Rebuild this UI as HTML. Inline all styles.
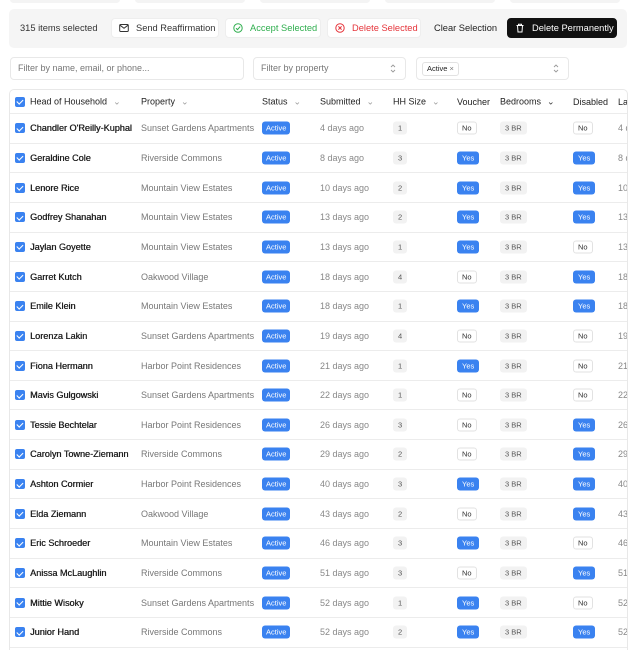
<!DOCTYPE html>
<html><head><meta charset="utf-8"><style>
*{box-sizing:border-box;margin:0;padding:0}
html,body{width:640px;height:650px;overflow:hidden}
body{background:#fff;font-family:"Liberation Sans",sans-serif;font-size:9px;color:#222;position:relative}
.top{position:absolute;top:-4px;height:7px;background:#f4f4f4;border-radius:4px}
.bar{position:absolute;left:9px;top:9px;width:618px;height:39px;background:#f5f5f5;border-radius:5px}
.btn{position:absolute;top:18px;height:20px;border-radius:4px;background:#fff;border:1px solid #eee;font-size:9.3px;line-height:18px;padding-left:24px}
.btn svg{position:absolute;left:7px;top:4px}
.inp{position:absolute;top:57px;height:23px;border:1px solid #e8e8e8;border-radius:4px;background:#fff;font-size:9px;color:#777;line-height:21px;padding-left:7px}
.chev{position:absolute;right:8px;top:5px}
.tbl{position:absolute;left:9px;top:89px;width:619px;height:561px;border:1px solid #e8e8e8;border-bottom:none;border-radius:5px 5px 0 0;overflow:hidden;background:#fff}
.r{position:absolute;left:0;width:619px;height:29.65px;border-bottom:1px solid #ececec}
.r>*{position:absolute;top:50%;transform:translateY(-50%);white-space:nowrap}
.h{height:24px;top:0;color:#222}
.cb{left:5px;width:10px;height:10px;border-radius:2px;background:#3a82f0}
.cb:after{content:"";position:absolute;left:3px;top:1.5px;width:2.5px;height:5px;border:solid #fff;border-width:0 1.3px 1.3px 0;transform:rotate(45deg)}
.n{left:20px;color:#222;text-shadow:0.35px 0 0 #222;font-size:9.1px}
.p{left:131px;color:#777}
.st{left:252px;background:#3a82f0;color:#fff;font-size:7.5px;padding:2px 4px;border-radius:3px}
.su{left:310px;color:#888}
.hh{left:383px;background:#f2f2f2;color:#555;font-size:7.5px;padding:2px 5px;border-radius:3px}
.v{left:447px}.d{left:563px}
.y{background:#3a82f0;color:#fff;font-size:7.5px;padding:2px 5px;border-radius:3px}
.no{background:#fff;border:1px solid #e2e2e2;color:#333;font-size:7.5px;padding:1px 4px;border-radius:3px}
.b{left:490px;background:#f2f2f2;color:#555;font-size:7.5px;padding:2px 5px;border-radius:3px}
.l{left:608px;color:#888}
.h span.c{color:#999;font-size:9px;margin-left:6px}
</style></head><body>
<div class="top" style="left:10px;width:110px"></div><div class="top" style="left:135px;width:110px"></div><div class="top" style="left:260px;width:110px"></div><div class="top" style="left:385px;width:110px"></div><div class="top" style="left:510px;width:110px"></div>
<div class="bar"></div>
<div style="position:absolute;left:20px;top:23px;font-size:9.3px;color:#333">315 items selected</div>
<div class="btn" style="left:111px;width:108px;color:#333"><svg width="10" height="10" viewBox="0 0 10 10"><rect x="0.7" y="1.5" width="8.6" height="7" rx="1" fill="none" stroke="#333" stroke-width="1"/><path d="M1 2.2L5 5.3L9 2.2" fill="none" stroke="#333" stroke-width="1"/></svg>Send Reaffirmation</div>
<div class="btn" style="left:225px;width:96px;color:#2fae4e"><svg width="10" height="10" viewBox="0 0 10 10"><circle cx="5" cy="5" r="4.2" fill="none" stroke="#2fae4e" stroke-width="1"/><path d="M3 5.2L4.5 6.6L7.2 3.6" fill="none" stroke="#2fae4e" stroke-width="1"/></svg>Accept Selected</div>
<div class="btn" style="left:327px;width:94px;color:#e5343a"><svg width="10" height="10" viewBox="0 0 10 10"><circle cx="5" cy="5" r="4.2" fill="none" stroke="#e5343a" stroke-width="1"/><path d="M3.4 3.4L6.6 6.6M6.6 3.4L3.4 6.6" stroke="#e5343a" stroke-width="1"/></svg>Delete Selected</div>
<div style="position:absolute;left:434px;top:23px;color:#222;font-size:9.3px">Clear Selection</div>
<div class="btn" style="left:507px;width:110px;background:#111;border-color:#111;color:#fff"><svg width="10" height="10" viewBox="0 0 10 10"><path d="M1.5 2.5H8.5M3.5 2.5V1.2H6.5V2.5M2.5 2.5L3 9H7L7.5 2.5" fill="none" stroke="#fff" stroke-width="1"/></svg>Delete Permanently</div>
<div class="inp" style="left:10px;width:234px">Filter by name, email, or phone...</div>
<div class="inp" style="left:253px;width:153px">Filter by property<svg class="chev" width="8" height="11" viewBox="0 0 8 11"><path d="M2 4L4 2L6 4M2 7L4 9L6 7" fill="none" stroke="#999" stroke-width="0.9"/></svg></div>
<div class="inp" style="left:416px;width:153px"><span style="display:inline-block;border:1px solid #e2e2e2;border-radius:3px;line-height:12px;padding:0 4px;font-size:7.5px;color:#222;margin-left:-2px">Active <span style="color:#777">×</span></span><svg class="chev" width="8" height="11" viewBox="0 0 8 11"><path d="M2 4L4 2L6 4M2 7L4 9L6 7" fill="none" stroke="#999" stroke-width="0.9"/></svg></div>
<div class="tbl">
<div class="r h"><div class="cb"></div><div style="left:20px">Head of Household<span class="c">⌄</span></div><div style="left:131px">Property<span class="c">⌄</span></div><div style="left:252px">Status<span class="c">⌄</span></div><div style="left:310px">Submitted<span class="c">⌄</span></div><div style="left:383px">HH Size<span class="c">⌄</span></div><div style="left:447px">Voucher</div><div style="left:490px">Bedrooms<span class="c" style="color:#333">⌄</span></div><div style="left:563px">Disabled</div><div style="left:608px">La</div></div>
<div class="r" style="top:24px"><div class="cb"></div><div class="n">Chandler O'Reilly-Kuphal</div><div class="p">Sunset Gardens Apartments</div><div class="st">Active</div><div class="su">4 days ago</div><div class="hh">1</div><div class="v no">No</div><div class="b">3 BR</div><div class="d no">No</div><div class="l">4 d</div></div>
<div class="r" style="top:53.65px"><div class="cb"></div><div class="n">Geraldine Cole</div><div class="p">Riverside Commons</div><div class="st">Active</div><div class="su">8 days ago</div><div class="hh">3</div><div class="v y">Yes</div><div class="b">3 BR</div><div class="d y">Yes</div><div class="l">8 d</div></div>
<div class="r" style="top:83.3px"><div class="cb"></div><div class="n">Lenore Rice</div><div class="p">Mountain View Estates</div><div class="st">Active</div><div class="su">10 days ago</div><div class="hh">2</div><div class="v y">Yes</div><div class="b">3 BR</div><div class="d y">Yes</div><div class="l">10</div></div>
<div class="r" style="top:112.95px"><div class="cb"></div><div class="n">Godfrey Shanahan</div><div class="p">Mountain View Estates</div><div class="st">Active</div><div class="su">13 days ago</div><div class="hh">2</div><div class="v y">Yes</div><div class="b">3 BR</div><div class="d y">Yes</div><div class="l">13</div></div>
<div class="r" style="top:142.6px"><div class="cb"></div><div class="n">Jaylan Goyette</div><div class="p">Mountain View Estates</div><div class="st">Active</div><div class="su">13 days ago</div><div class="hh">1</div><div class="v y">Yes</div><div class="b">3 BR</div><div class="d no">No</div><div class="l">13</div></div>
<div class="r" style="top:172.25px"><div class="cb"></div><div class="n">Garret Kutch</div><div class="p">Oakwood Village</div><div class="st">Active</div><div class="su">18 days ago</div><div class="hh">4</div><div class="v no">No</div><div class="b">3 BR</div><div class="d y">Yes</div><div class="l">18</div></div>
<div class="r" style="top:201.9px"><div class="cb"></div><div class="n">Emile Klein</div><div class="p">Mountain View Estates</div><div class="st">Active</div><div class="su">18 days ago</div><div class="hh">1</div><div class="v y">Yes</div><div class="b">3 BR</div><div class="d y">Yes</div><div class="l">18</div></div>
<div class="r" style="top:231.55px"><div class="cb"></div><div class="n">Lorenza Lakin</div><div class="p">Sunset Gardens Apartments</div><div class="st">Active</div><div class="su">19 days ago</div><div class="hh">4</div><div class="v no">No</div><div class="b">3 BR</div><div class="d no">No</div><div class="l">19</div></div>
<div class="r" style="top:261.2px"><div class="cb"></div><div class="n">Fiona Hermann</div><div class="p">Harbor Point Residences</div><div class="st">Active</div><div class="su">21 days ago</div><div class="hh">1</div><div class="v y">Yes</div><div class="b">3 BR</div><div class="d no">No</div><div class="l">21</div></div>
<div class="r" style="top:290.85px"><div class="cb"></div><div class="n">Mavis Gulgowski</div><div class="p">Sunset Gardens Apartments</div><div class="st">Active</div><div class="su">22 days ago</div><div class="hh">1</div><div class="v no">No</div><div class="b">3 BR</div><div class="d no">No</div><div class="l">22</div></div>
<div class="r" style="top:320.5px"><div class="cb"></div><div class="n">Tessie Bechtelar</div><div class="p">Harbor Point Residences</div><div class="st">Active</div><div class="su">26 days ago</div><div class="hh">3</div><div class="v no">No</div><div class="b">3 BR</div><div class="d y">Yes</div><div class="l">26</div></div>
<div class="r" style="top:350.15px"><div class="cb"></div><div class="n">Carolyn Towne-Ziemann</div><div class="p">Riverside Commons</div><div class="st">Active</div><div class="su">29 days ago</div><div class="hh">2</div><div class="v no">No</div><div class="b">3 BR</div><div class="d y">Yes</div><div class="l">29</div></div>
<div class="r" style="top:379.8px"><div class="cb"></div><div class="n">Ashton Cormier</div><div class="p">Harbor Point Residences</div><div class="st">Active</div><div class="su">40 days ago</div><div class="hh">3</div><div class="v y">Yes</div><div class="b">3 BR</div><div class="d y">Yes</div><div class="l">40</div></div>
<div class="r" style="top:409.45px"><div class="cb"></div><div class="n">Elda Ziemann</div><div class="p">Oakwood Village</div><div class="st">Active</div><div class="su">43 days ago</div><div class="hh">2</div><div class="v no">No</div><div class="b">3 BR</div><div class="d y">Yes</div><div class="l">43</div></div>
<div class="r" style="top:439.1px"><div class="cb"></div><div class="n">Eric Schroeder</div><div class="p">Mountain View Estates</div><div class="st">Active</div><div class="su">46 days ago</div><div class="hh">3</div><div class="v y">Yes</div><div class="b">3 BR</div><div class="d no">No</div><div class="l">46</div></div>
<div class="r" style="top:468.75px"><div class="cb"></div><div class="n">Anissa McLaughlin</div><div class="p">Riverside Commons</div><div class="st">Active</div><div class="su">51 days ago</div><div class="hh">3</div><div class="v no">No</div><div class="b">3 BR</div><div class="d y">Yes</div><div class="l">51</div></div>
<div class="r" style="top:498.4px"><div class="cb"></div><div class="n">Mittie Wisoky</div><div class="p">Sunset Gardens Apartments</div><div class="st">Active</div><div class="su">52 days ago</div><div class="hh">1</div><div class="v y">Yes</div><div class="b">3 BR</div><div class="d no">No</div><div class="l">52</div></div>
<div class="r" style="top:528.05px"><div class="cb"></div><div class="n">Junior Hand</div><div class="p">Riverside Commons</div><div class="st">Active</div><div class="su">52 days ago</div><div class="hh">2</div><div class="v y">Yes</div><div class="b">3 BR</div><div class="d y">Yes</div><div class="l">52</div></div>
</div>
</body></html>
